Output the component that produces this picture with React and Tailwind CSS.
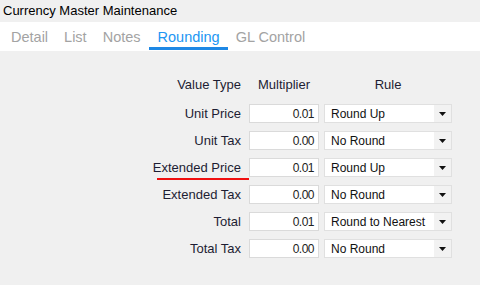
import React from 'react';

const rows = [
    { label: 'Unit Price', value: '0.01', rule: 'Round Up' },
    { label: 'Unit Tax', value: '0.00', rule: 'No Round' },
    { label: 'Extended Price', value: '0.01', rule: 'Round Up', marked: true },
    { label: 'Extended Tax', value: '0.00', rule: 'No Round' },
    { label: 'Total', value: '0.01', rule: 'Round to Nearest' },
    { label: 'Total Tax', value: '0.00', rule: 'No Round' },
];

const tabs = ['Detail', 'List', 'Notes', 'Rounding', 'GL Control'];

function Arrow() {
    return (
        <svg width="7" height="4" viewBox="0 0 7 4" className="block">
            <path d="M0 0h7L3.5 4z" fill="#111" />
        </svg>
    );
}

export default function App() {
    return (
        <div className="w-[480px] h-[285px] bg-[#f0f0f0] font-['Liberation_Sans',Arial,sans-serif] overflow-hidden">
            {/* title */}
            <div className="h-[22px] pt-[3px] pl-[3px] text-[13px] leading-[15px] text-black">
                Currency Master Maintenance
            </div>

            {/* tabs */}
            <div className="h-[29px] bg-white flex pl-[3px]">
                {tabs.map((t) => (
                    <div
                        key={t}
                        className={`h-[28px] pt-[7px] pb-[2px] text-[14.5px] leading-[16px] border-b-[3px] ${t === 'Rounding' ? 'text-[#2196f3] border-[#1e88e5] pr-[8px] pl-[9px]' : 'text-[#a3a3a3] border-transparent px-[8px]'}`}
                    >
                        {t}
                    </div>
                ))}
            </div>

            {/* grid */}
            <div className="pl-[130px] pt-[26px] text-[13px] text-[#1d1d33]">
                <div className="flex leading-[15px]">
                    <div className="w-[111px] text-right">Value Type</div>
                    <div className="w-[70px] ml-[8px] text-center">Multiplier</div>
                    <div className="w-[128px] ml-[5px] text-center">Rule</div>
                </div>
                <div className="mt-[12px] flex flex-col gap-[8px]">
                    {rows.map((r) => (
                        <div key={r.label} className="flex items-center h-[19px]">
                            <div className="w-[111px] text-right leading-[15px] relative">
                                {r.label}
                                {r.marked && (
                                    <span className="absolute left-[27px] top-[18px] w-[92px] h-[2px] bg-[#f01010]" />
                                )}
                            </div>
                            <div className="w-[70px] h-[19px] ml-[8px] bg-white border border-[#dadada] flex items-center justify-end pr-[4px] text-[12px] leading-[14px] tracking-[-0.5px] text-[#222]">
                                {r.value}
                            </div>
                            <div className="w-[128px] h-[19px] ml-[5px] bg-white border border-[#e0e0e0] flex items-stretch text-[12px] text-[#111]">
                                <div className="flex-1 flex items-center pl-[6px] leading-[14px]">{r.rule}</div>
                                <div className="w-[17px] bg-[#f2f2f2] flex items-center justify-center">
                                    <Arrow />
                                </div>
                            </div>
                        </div>
                    ))}
                </div>
            </div>
        </div>
    );
}
